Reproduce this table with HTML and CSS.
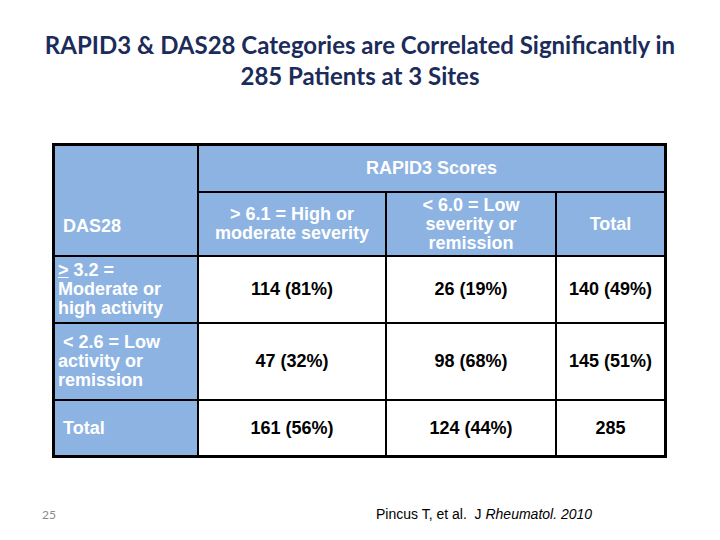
FILE: index.html
```html
<!DOCTYPE html>
<html>
<head>
<meta charset="utf-8">
<link rel="stylesheet" href="styles.css">
</head>
<body>
<div class="slide">
  <h1 class="title">RAPID3 &amp; DAS28 Categories are Correlated Significantly in<br>285 Patients at 3 Sites</h1>
  <div class="grid">
    <div class="cell head left das"><span class="ind">DAS28</span></div>
    <div class="cell head rapid">RAPID3 Scores</div>
    <div class="cell head">&gt; 6.1 = High or<br>moderate severity</div>
    <div class="cell head">&lt; 6.0 = Low<br>severity or<br>remission</div>
    <div class="cell head">Total</div>

    <div class="cell head left"><span><u>&gt;</u> 3.2 =<br>Moderate or<br>high activity</span></div>
    <div class="cell body">114 (81%)</div>
    <div class="cell body">26 (19%)</div>
    <div class="cell body">140 (49%)</div>

    <div class="cell head left"><span><span class="ind">&lt; 2.6 = Low</span><br>activity or<br>remission</span></div>
    <div class="cell body">47 (32%)</div>
    <div class="cell body">98 (68%)</div>
    <div class="cell body">145 (51%)</div>

    <div class="cell head left"><span class="ind">Total</span></div>
    <div class="cell body">161 (56%)</div>
    <div class="cell body">124 (44%)</div>
    <div class="cell body">285</div>
  </div>
  <div class="footer">
    <span class="num">25</span>
    <span class="cite">Pincus T, et al.&nbsp; J <i>Rheumatol. 2010</i></span>
  </div>
</div>
</body>
</html>
```

FILE: styles.css
```css
html, body {
  margin: 0;
  padding: 0;
  background: #ffffff;
}
.slide {
  width: 720px;
  height: 540px;
  overflow: hidden;
}
.title {
  margin: 0;
  padding-top: 29px;
  font-family: "Lato", "Open Sans", sans-serif;
  font-weight: 700;
  font-size: 24px;
  line-height: 31px;
  color: #1b2b5a;
  text-align: center;
}
.grid {
  margin: 52px 0 0 52px;
  width: max-content;
  display: grid;
  grid-template-columns: 142px 186px 168px 107px;
  grid-template-rows: 45px 62px 65px 75px 54px;
  gap: 2px;
  background: #000000;
  border: 3px solid #000000;
  font-family: "Liberation Sans", Arial, sans-serif;
  font-weight: 700;
  font-size: 18px;
  line-height: 19px;
}
.cell {
  display: flex;
  align-items: center;
  justify-content: center;
  text-align: center;
}
.head {
  background: #8db3e2;
  color: #ffffff;
}
.body {
  background: #ffffff;
  color: #000000;
}
.left {
  justify-content: flex-start;
  text-align: left;
  padding-left: 3px;
}
.ind {
  padding-left: 5px;
}
.das {
  grid-row: span 2;
  align-items: flex-end;
  padding-bottom: 19px;
}
.rapid {
  grid-column: span 3;
}
.footer {
  display: grid;
  grid-template-columns: 334px auto;
  align-items: center;
  padding-left: 42px;
  margin-top: 48px;
}
.num {
  font-family: "Lato", "Open Sans", sans-serif;
  font-size: 12px;
  color: #8a8a8a;
}
.cite {
  font-family: "Liberation Sans", Arial, sans-serif;
  font-size: 14px;
  color: #000000;
}
```
